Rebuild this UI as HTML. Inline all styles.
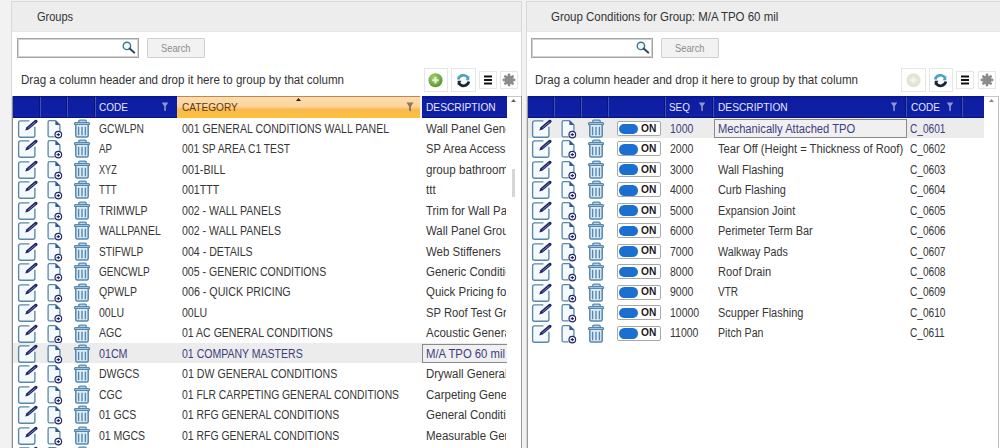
<!DOCTYPE html>
<html><head><meta charset="utf-8"><style>
*{box-sizing:border-box;margin:0;padding:0}
html,body{width:1000px;height:448px;overflow:hidden;background:#f2f2f2;font-family:"Liberation Sans",sans-serif;color:#333}
.a{position:absolute}
.panel{position:absolute;background:#fff;border:1px solid #d9d9d9}
.phead{position:absolute;left:0;top:0;right:0;height:30px;background:#ededed;border-bottom:1px solid #e6e6e6}
.ptitle{position:absolute;top:8.5px;font-size:12.8px;color:#333;white-space:nowrap}
.sbox{position:absolute;top:38px;width:122px;height:20px;border:1px solid #a3a3a3;box-shadow:inset 0 0 0 1px #d2d2d2;background:#fff}
.sbtn{position:absolute;top:38px;width:58px;height:20px;border:1px solid #cfcfcf;border-radius:1px;background:#f2f2f2;color:#8c8c8c;font-size:10.5px;line-height:12px}
.drag{position:absolute;top:73px;font-size:12.5px;color:#333;white-space:nowrap}
.tb{position:absolute;border:1px solid #e6e6e6;background:#fff}
.grid{position:absolute;background:#fff}
.hdr{position:absolute;top:96px;height:22px;background:linear-gradient(#091590,#0e1ea2 15%,#0f1fa4 80%,#1324aa 90%,#071176);}
.hsep{position:absolute;top:97px;height:20px;width:2px;border-left:1px solid #081478;background:#4252b4}
.htxt{position:absolute;top:100px;font-size:11.8px;color:#e6e6ff;white-space:nowrap}
.cell{position:absolute;font-size:12.5px;line-height:15px;white-space:nowrap;overflow:hidden;color:#363636}
.cell.sel{color:#3d3d80}
.t{display:inline-block;transform-origin:0 0}
.ic{position:absolute}
.selbg{position:absolute;background:#ececec}
.focus{position:absolute;border:1px solid #8a8a8a;background:#f0f0f0}
.tog{position:absolute;width:44px;height:15px;border:1px solid #a8a8a8;border-radius:2px;background:#fff}
.tog .pill{position:absolute;left:1.3px;top:1.6px;width:19.5px;height:10.6px;border-radius:5.3px;background:#1a6fd0}
.tog span{position:absolute;left:23.5px;top:-0.3px;font-size:10.2px;font-weight:bold;color:#1a1a1a;line-height:13px}
.filt{position:absolute;top:102px}
</style></head><body>
<svg width="0" height="0" style="position:absolute">
<defs>
<symbol id="rowic" viewBox="0 0 95 21">
 <rect x="6" y="3.3" width="15.5" height="15.5" rx="1.5" fill="#f3f9fd"/>
 <path d="M16.4 2.9H7.6Q5.6 2.9 5.6 4.9V17.2Q5.6 19.2 7.6 19.2H19.9Q21.9 19.2 21.9 17.2V8.8" fill="none" stroke="#5a87a6" stroke-width="1.35"/>
 <path d="M12.2 12.4L15.62 11.61L24.02 4.53A1.6 1.6 0 0 0 21.98 2.07L13.58 9.15Z" fill="#1e2262"/>
 <path d="M15.2 10.1L22.6 3.9" stroke="#8d98dc" stroke-width="0.8"/>
 <path d="M42.6 3H36.6Q35.5 3 35.5 4.2V17.4Q35.5 18.5 36.6 18.5H46.5V7Z" fill="#f3f9fd"/>
 <path d="M42.6 2.7H36.6Q35.1 2.7 35.1 4.2V17.4Q35.1 18.9 36.6 18.9H41.6" fill="none" stroke="#5a87a6" stroke-width="1.3"/>
 <path d="M42.6 2.7L46.9 7V13.2" fill="none" stroke="#5a87a6" stroke-width="1.3"/>
 <path d="M42.4 2.3L47.2 7.1H42.4Z" fill="#34579a"/>
 <circle cx="45.3" cy="16.6" r="3.3" fill="#fff" stroke="#262c6a" stroke-width="1.2"/>
 <path d="M45.3 14.9V18.3M43.6 16.6H47" stroke="#262c6a" stroke-width="1.1"/>
 <path d="M65.8 4.5V3.3Q65.8 2.2 66.9 2.2H72.1Q73.2 2.2 73.2 3.3V4.5" fill="#b6d4ee" stroke="#5787ad" stroke-width="1.3"/>
 <rect x="61.5" y="4.6" width="15" height="2.1" rx="1" fill="#b6d4ee" stroke="#5787ad" stroke-width="1.3"/>
 <path d="M62.8 7V17.6Q62.8 19.1 64.3 19.1H73.7Q75.2 19.1 75.2 17.6V7" fill="#dcecf8" stroke="#5787ad" stroke-width="1.5"/>
 <path d="M65.6 8.8V17.2M69 8.8V17.2M72.4 8.8V17.2" stroke="#5787ad" stroke-width="1.4"/>
</symbol>
<symbol id="filter" viewBox="0 0 8 10">
 <path d="M0.8 0.5H7.2L4.8 4.2V9.3L3.2 8.6V4.2Z" fill="#9096c8"/>
</symbol>
</defs></svg>

<!-- LEFT PANEL -->
<div class="panel" style="left:11px;top:1px;width:511px;height:460px">
 <div class="phead"></div>
</div>
<div class="ptitle" style="left:37px"><span class="t" style="transform:scaleX(0.858);">Groups</span></div>
<div class="sbox" style="left:17px"></div>
<svg class="a" style="left:121px;top:40px" width="16" height="16" viewBox="0 0 16 16"><circle cx="5.9" cy="5.9" r="3.7" fill="#f0fbff" stroke="#3f7686" stroke-width="1.4"/><path d="M8.6 8.6L13.2 12.6" stroke="#29485a" stroke-width="2" stroke-linecap="round"/></svg>
<div class="sbtn" style="left:147px"><div class="a" style="left:13px;top:3px"><span class="t" style="transform:scaleX(0.886);">Search</span></div></div>
<div class="drag" style="left:21px"><span class="t" style="transform:scaleX(0.926);">Drag a column header and drop it here to group by that column</span></div>
<div class="tb" style="left:424px;top:68px;width:24px;height:24px"></div>
<svg class="a" style="left:428px;top:73px" width="15" height="15" viewBox="0 0 15 15"><defs><radialGradient id="gg" cx="40%" cy="35%" r="65%"><stop offset="0" stop-color="#a8d478"/><stop offset="1" stop-color="#5a9432"/></radialGradient></defs><circle cx="7.5" cy="7.2" r="7" fill="url(#gg)"/><path d="M7.5 4V10.4M4.3 7.2H10.7" stroke="#e6f6d0" stroke-width="2"/></svg>
<div class="tb" style="left:451px;top:68px;width:25px;height:24px"></div>
<svg class="a" style="left:456px;top:73px" width="15" height="15" viewBox="0 0 15 15"><use href="#refresh"/></svg>
<div class="tb" style="left:479px;top:71px;width:18px;height:18px"></div>
<svg class="a" style="left:483px;top:75px" width="10" height="10" viewBox="0 0 10 10"><path d="M1 1.5H9M1 5H9M1 8.5H9" stroke="#111" stroke-width="1.8"/></svg>
<div class="tb" style="left:500px;top:71px;width:18px;height:18px"></div>
<svg class="a" style="left:502px;top:73px" width="14" height="14" viewBox="0 0 14 14"><use href="#gear"/></svg>

<!-- left grid -->
<div class="a" style="left:12px;top:96px;width:510px;height:360px;border-left:1px solid #8a8a8a;border-top:1px solid #c8c8c8;background:#fff"></div>
<div class="hdr" style="left:13px;width:164px"></div>
<div class="a" style="left:177px;top:96px;width:243px;height:22px;background:linear-gradient(#fddcac 0%,#fcd49c 45%,#f9b94e 60%,#fcc23e 100%);border-top:1px solid #b98a50"></div><div class="a" style="left:420px;top:96px;width:2px;height:22px;background:#eef0f6"></div>
<div class="hdr" style="left:422px;width:85px"></div>
<div class="hsep" style="left:39px"></div><div class="hsep" style="left:66px"></div><div class="hsep" style="left:94px"></div>
<div class="htxt" style="left:98.5px"><span class="t" style="transform:scaleX(0.848);">CODE</span></div>
<svg class="filt" style="left:160.5px" width="8" height="10"><use href="#filter"/></svg>
<div class="htxt" style="left:182px;color:#5a3a14"><span class="t" style="transform:scaleX(0.856);">CATEGORY</span></div>
<svg class="a" style="left:296px;top:98px" width="5" height="3"><path d="M0 3L2.5 0L5 3Z" fill="#222"/></svg>
<svg class="filt" style="left:406px" width="8" height="10"><path d="M0.5 0.5H7.5L5 4.5V9.5L3 8.5V4.5Z" fill="#8a7a60"/></svg>
<div class="htxt" style="left:426px"><span class="t" style="transform:scaleX(0.865);">DESCRIPTION</span></div>
<svg class="a" style="left:511px;top:99px" width="5" height="3"><path d="M0 3L2.5 0L5 3Z" fill="#666"/></svg>
<div class="a" style="left:512px;top:169px;width:3px;height:28px;background:#d6d6d6"></div>
<div class="a" style="left:521px;top:96px;width:1px;height:360px;background:#9a9a9a"></div>
<svg class="ic" style="left:13px;top:118.00px" width="95" height="21" viewBox="0 0 95 21"><use href="#rowic"/></svg><div class="cell" style="left:98.5px;top:121.80px;width:76px"><span class="t" style="transform:scaleX(0.820);">GCWLPN</span></div><div class="cell" style="left:182px;top:121.80px;width:236px"><span class="t" style="transform:scaleX(0.843);">001 GENERAL CONDITIONS WALL PANEL</span></div><div class="cell" style="left:426px;top:121.80px;width:80px"><span class="t" style="transform:scaleX(0.916);">Wall Panel General Conditions</span></div><svg class="ic" style="left:13px;top:138.45px" width="95" height="21" viewBox="0 0 95 21"><use href="#rowic"/></svg><div class="cell" style="left:98.5px;top:142.25px;width:76px"><span class="t" style="transform:scaleX(0.779);">AP</span></div><div class="cell" style="left:182px;top:142.25px;width:236px"><span class="t" style="transform:scaleX(0.821);">001 SP AREA C1 TEST</span></div><div class="cell" style="left:426px;top:142.25px;width:80px"><span class="t" style="transform:scaleX(0.895);">SP Area Access I</span></div><svg class="ic" style="left:13px;top:158.90px" width="95" height="21" viewBox="0 0 95 21"><use href="#rowic"/></svg><div class="cell" style="left:98.5px;top:162.70px;width:76px"><span class="t" style="transform:scaleX(0.728);">XYZ</span></div><div class="cell" style="left:182px;top:162.70px;width:236px"><span class="t" style="transform:scaleX(0.857);">001-BILL</span></div><div class="cell" style="left:426px;top:162.70px;width:80px"><span class="t" style="transform:scaleX(0.930);">group bathroom</span></div><svg class="ic" style="left:13px;top:179.35px" width="95" height="21" viewBox="0 0 95 21"><use href="#rowic"/></svg><div class="cell" style="left:98.5px;top:183.15px;width:76px"><span class="t" style="transform:scaleX(0.772);">TTT</span></div><div class="cell" style="left:182px;top:183.15px;width:236px"><span class="t" style="transform:scaleX(0.850);">001TTT</span></div><div class="cell" style="left:426px;top:183.15px;width:80px"><span class="t" style="transform:scaleX(0.930);">ttt</span></div><svg class="ic" style="left:13px;top:199.80px" width="95" height="21" viewBox="0 0 95 21"><use href="#rowic"/></svg><div class="cell" style="left:98.5px;top:203.60px;width:76px"><span class="t" style="transform:scaleX(0.843);">TRIMWLP</span></div><div class="cell" style="left:182px;top:203.60px;width:236px"><span class="t" style="transform:scaleX(0.846);">002 - WALL PANELS</span></div><div class="cell" style="left:426px;top:203.60px;width:80px"><span class="t" style="transform:scaleX(0.914);">Trim for Wall Panels</span></div><svg class="ic" style="left:13px;top:220.25px" width="95" height="21" viewBox="0 0 95 21"><use href="#rowic"/></svg><div class="cell" style="left:98.5px;top:224.05px;width:76px"><span class="t" style="transform:scaleX(0.838);">WALLPANEL</span></div><div class="cell" style="left:182px;top:224.05px;width:236px"><span class="t" style="transform:scaleX(0.846);">002 - WALL PANELS</span></div><div class="cell" style="left:426px;top:224.05px;width:80px"><span class="t" style="transform:scaleX(0.911);">Wall Panel Group</span></div><svg class="ic" style="left:13px;top:240.70px" width="95" height="21" viewBox="0 0 95 21"><use href="#rowic"/></svg><div class="cell" style="left:98.5px;top:244.50px;width:76px"><span class="t" style="transform:scaleX(0.816);">STIFWLP</span></div><div class="cell" style="left:182px;top:244.50px;width:236px"><span class="t" style="transform:scaleX(0.850);">004 - DETAILS</span></div><div class="cell" style="left:426px;top:244.50px;width:80px"><span class="t" style="transform:scaleX(0.916);">Web Stiffeners</span></div><svg class="ic" style="left:13px;top:261.15px" width="95" height="21" viewBox="0 0 95 21"><use href="#rowic"/></svg><div class="cell" style="left:98.5px;top:264.95px;width:76px"><span class="t" style="transform:scaleX(0.804);">GENCWLP</span></div><div class="cell" style="left:182px;top:264.95px;width:236px"><span class="t" style="transform:scaleX(0.844);">005 - GENERIC CONDITIONS</span></div><div class="cell" style="left:426px;top:264.95px;width:80px"><span class="t" style="transform:scaleX(0.919);">Generic Conditions</span></div><svg class="ic" style="left:13px;top:281.60px" width="95" height="21" viewBox="0 0 95 21"><use href="#rowic"/></svg><div class="cell" style="left:98.5px;top:285.40px;width:76px"><span class="t" style="transform:scaleX(0.840);">QPWLP</span></div><div class="cell" style="left:182px;top:285.40px;width:236px"><span class="t" style="transform:scaleX(0.855);">006 - QUICK PRICING</span></div><div class="cell" style="left:426px;top:285.40px;width:80px"><span class="t" style="transform:scaleX(0.918);">Quick Pricing for</span></div><svg class="ic" style="left:13px;top:302.05px" width="95" height="21" viewBox="0 0 95 21"><use href="#rowic"/></svg><div class="cell" style="left:98.5px;top:305.85px;width:76px"><span class="t" style="transform:scaleX(0.840);">00LU</span></div><div class="cell" style="left:182px;top:305.85px;width:236px"><span class="t" style="transform:scaleX(0.840);">00LU</span></div><div class="cell" style="left:426px;top:305.85px;width:80px"><span class="t" style="transform:scaleX(0.900);">SP Roof Test Group</span></div><svg class="ic" style="left:13px;top:322.50px" width="95" height="21" viewBox="0 0 95 21"><use href="#rowic"/></svg><div class="cell" style="left:98.5px;top:326.30px;width:76px"><span class="t" style="transform:scaleX(0.840);">AGC</span></div><div class="cell" style="left:182px;top:326.30px;width:236px"><span class="t" style="transform:scaleX(0.843);">01 AC GENERAL CONDITIONS</span></div><div class="cell" style="left:426px;top:326.30px;width:80px"><span class="t" style="transform:scaleX(0.918);">Acoustic General</span></div><div class="selbg" style="left:13px;top:342.95px;width:494px;height:20.45px"></div><div class="focus" style="left:421.5px;top:343.95px;width:95px;height:19.25px"></div><svg class="ic" style="left:13px;top:342.95px" width="95" height="21" viewBox="0 0 95 21"><use href="#rowic"/></svg><div class="cell sel" style="left:98.5px;top:346.75px;width:76px"><span class="t" style="transform:scaleX(0.855);">01CM</span></div><div class="cell sel" style="left:182px;top:346.75px;width:236px"><span class="t" style="transform:scaleX(0.842);">01 COMPANY MASTERS</span></div><div class="cell sel" style="left:426px;top:346.75px;width:80px"><span class="t" style="transform:scaleX(0.905);">M/A TPO 60 mil</span></div><svg class="ic" style="left:13px;top:363.40px" width="95" height="21" viewBox="0 0 95 21"><use href="#rowic"/></svg><div class="cell" style="left:98.5px;top:367.20px;width:76px"><span class="t" style="transform:scaleX(0.840);">DWGCS</span></div><div class="cell" style="left:182px;top:367.20px;width:236px"><span class="t" style="transform:scaleX(0.849);">01 DW GENERAL CONDITIONS</span></div><div class="cell" style="left:426px;top:367.20px;width:80px"><span class="t" style="transform:scaleX(0.917);">Drywall General</span></div><svg class="ic" style="left:13px;top:383.85px" width="95" height="21" viewBox="0 0 95 21"><use href="#rowic"/></svg><div class="cell" style="left:98.5px;top:387.65px;width:76px"><span class="t" style="transform:scaleX(0.840);">CGC</span></div><div class="cell" style="left:182px;top:387.65px;width:236px"><span class="t" style="transform:scaleX(0.828);">01 FLR CARPETING GENERAL CONDITIONS</span></div><div class="cell" style="left:426px;top:387.65px;width:80px"><span class="t" style="transform:scaleX(0.919);">Carpeting General</span></div><svg class="ic" style="left:13px;top:404.30px" width="95" height="21" viewBox="0 0 95 21"><use href="#rowic"/></svg><div class="cell" style="left:98.5px;top:408.10px;width:76px"><span class="t" style="transform:scaleX(0.840);">01 GCS</span></div><div class="cell" style="left:182px;top:408.10px;width:236px"><span class="t" style="transform:scaleX(0.834);">01 RFG GENERAL CONDITIONS</span></div><div class="cell" style="left:426px;top:408.10px;width:80px"><span class="t" style="transform:scaleX(0.919);">General Conditions</span></div><svg class="ic" style="left:13px;top:424.75px" width="95" height="21" viewBox="0 0 95 21"><use href="#rowic"/></svg><div class="cell" style="left:98.5px;top:428.55px;width:76px"><span class="t" style="transform:scaleX(0.840);">01 MGCS</span></div><div class="cell" style="left:182px;top:428.55px;width:236px"><span class="t" style="transform:scaleX(0.834);">01 RFG GENERAL CONDITIONS</span></div><div class="cell" style="left:426px;top:428.55px;width:80px"><span class="t" style="transform:scaleX(0.919);">Measurable General</span></div><svg class="ic" style="left:13px;top:445.20px" width="95" height="21" viewBox="0 0 95 21"><use href="#rowic"/></svg><div class="cell" style="left:98.5px;top:449.00px;width:76px"><span class="t" style="transform:scaleX(0.840);">01 XGCS</span></div><div class="cell" style="left:182px;top:449.00px;width:236px"><span class="t" style="transform:scaleX(0.834);">01 RFG GENERAL CONDITIONS</span></div><div class="cell" style="left:426px;top:449.00px;width:80px"><span class="t" style="transform:scaleX(0.917);">General</span></div>
<div class="a" style="left:507px;top:118px;width:14px;height:340px;background:#fff"></div>
<div class="a" style="left:512px;top:169px;width:3px;height:28px;background:#d6d6d6"></div>

<!-- RIGHT PANEL -->
<div class="panel" style="left:526px;top:1px;width:480px;height:460px">
 <div class="phead"></div>
</div>
<div class="ptitle" style="left:551px"><span class="t" style="transform:scaleX(0.896);">Group Conditions for Group: M/A TPO 60 mil</span></div>
<div class="sbox" style="left:531px"></div>
<svg class="a" style="left:635px;top:40px" width="16" height="16" viewBox="0 0 16 16"><circle cx="5.9" cy="5.9" r="3.7" fill="#f0fbff" stroke="#3f7686" stroke-width="1.4"/><path d="M8.6 8.6L13.2 12.6" stroke="#29485a" stroke-width="2" stroke-linecap="round"/></svg>
<div class="sbtn" style="left:661px"><div class="a" style="left:13px;top:3px"><span class="t" style="transform:scaleX(0.886);">Search</span></div></div>
<div class="drag" style="left:535px"><span class="t" style="transform:scaleX(0.926);">Drag a column header and drop it here to group by that column</span></div>
<div class="tb" style="left:901px;top:68px;width:25px;height:24px"></div>
<svg class="a" style="left:906px;top:73px" width="15" height="15" viewBox="0 0 15 15"><circle cx="7.5" cy="7.2" r="7" fill="#dfe6d2"/><path d="M7.5 3.8V10.6M4.1 7.2H10.9" stroke="#f2f6ea" stroke-width="2.2"/></svg>
<div class="tb" style="left:929px;top:68px;width:24px;height:24px"></div>
<svg class="a" style="left:933px;top:73px" width="15" height="15" viewBox="0 0 15 15"><use href="#refresh"/></svg>
<div class="tb" style="left:956px;top:71px;width:18px;height:18px"></div>
<svg class="a" style="left:960px;top:75px" width="10" height="10" viewBox="0 0 10 10"><path d="M1 1.5H9M1 5H9M1 8.5H9" stroke="#111" stroke-width="1.8"/></svg>
<div class="tb" style="left:978px;top:71px;width:18px;height:18px"></div>
<svg class="a" style="left:980px;top:73px" width="14" height="14" viewBox="0 0 14 14"><use href="#gear"/></svg>

<!-- right grid -->
<div class="a" style="left:527px;top:96px;width:472px;height:360px;border-left:1px solid #9a9a9a;border-top:1px solid #c8c8c8;border-right:1px solid #bdbdbd;background:#fff"></div>
<div class="hdr" style="left:528px;width:456px"></div>
<div class="hsep" style="left:553px"></div><div class="hsep" style="left:580px"></div><div class="hsep" style="left:607px"></div><div class="hsep" style="left:664px"></div><div class="hsep" style="left:712px"></div><div class="hsep" style="left:905px"></div><div class="hsep" style="left:961px"></div>
<div class="htxt" style="left:669px"><span class="t" style="transform:scaleX(0.840);">SEQ</span></div>
<svg class="filt" style="left:698px" width="8" height="10"><use href="#filter"/></svg>
<div class="htxt" style="left:718px"><span class="t" style="transform:scaleX(0.865);">DESCRIPTION</span></div>
<svg class="filt" style="left:890px" width="8" height="10"><use href="#filter"/></svg>
<div class="htxt" style="left:911px"><span class="t" style="transform:scaleX(0.848);">CODE</span></div>
<svg class="filt" style="left:946px" width="8" height="10"><use href="#filter"/></svg>
<svg class="a" style="left:989px;top:99px" width="5" height="3"><path d="M0 3L2.5 0L5 3Z" fill="#888"/></svg>
<div class="selbg" style="left:528px;top:118.00px;width:456px;height:20.45px"></div><div class="focus" style="left:713.5px;top:118.80px;width:193px;height:19.25px"></div><svg class="ic" style="left:527px;top:118.00px" width="95" height="21" viewBox="0 0 95 21"><use href="#rowic"/></svg><div class="tog" style="left:616.5px;top:121.00px"><div class="pill"></div><span>ON</span></div><div class="cell sel" style="left:669.5px;top:121.80px;width:40px"><span class="t" style="transform:scaleX(0.845);">1000</span></div><div class="cell sel" style="left:718px;top:121.80px;width:188px"><span class="t" style="transform:scaleX(0.895);">Mechanically Attached TPO</span></div><div class="cell sel" style="left:910px;top:121.80px;width:70px"><span class="t" style="transform:scaleX(0.811);">C_0601</span></div><svg class="ic" style="left:527px;top:138.45px" width="95" height="21" viewBox="0 0 95 21"><use href="#rowic"/></svg><div class="tog" style="left:616.5px;top:141.45px"><div class="pill"></div><span>ON</span></div><div class="cell" style="left:669.5px;top:142.25px;width:40px"><span class="t" style="transform:scaleX(0.840);">2000</span></div><div class="cell" style="left:718px;top:142.25px;width:188px"><span class="t" style="transform:scaleX(0.898);">Tear Off (Height = Thickness of Roof)</span></div><div class="cell" style="left:910px;top:142.25px;width:70px"><span class="t" style="transform:scaleX(0.811);">C_0602</span></div><svg class="ic" style="left:527px;top:158.90px" width="95" height="21" viewBox="0 0 95 21"><use href="#rowic"/></svg><div class="tog" style="left:616.5px;top:161.90px"><div class="pill"></div><span>ON</span></div><div class="cell" style="left:669.5px;top:162.70px;width:40px"><span class="t" style="transform:scaleX(0.840);">3000</span></div><div class="cell" style="left:718px;top:162.70px;width:188px"><span class="t" style="transform:scaleX(0.880);">Wall Flashing</span></div><div class="cell" style="left:910px;top:162.70px;width:70px"><span class="t" style="transform:scaleX(0.811);">C_0603</span></div><svg class="ic" style="left:527px;top:179.35px" width="95" height="21" viewBox="0 0 95 21"><use href="#rowic"/></svg><div class="tog" style="left:616.5px;top:182.35px"><div class="pill"></div><span>ON</span></div><div class="cell" style="left:669.5px;top:183.15px;width:40px"><span class="t" style="transform:scaleX(0.840);">4000</span></div><div class="cell" style="left:718px;top:183.15px;width:188px"><span class="t" style="transform:scaleX(0.872);">Curb Flashing</span></div><div class="cell" style="left:910px;top:183.15px;width:70px"><span class="t" style="transform:scaleX(0.811);">C_0604</span></div><svg class="ic" style="left:527px;top:199.80px" width="95" height="21" viewBox="0 0 95 21"><use href="#rowic"/></svg><div class="tog" style="left:616.5px;top:202.80px"><div class="pill"></div><span>ON</span></div><div class="cell" style="left:669.5px;top:203.60px;width:40px"><span class="t" style="transform:scaleX(0.840);">5000</span></div><div class="cell" style="left:718px;top:203.60px;width:188px"><span class="t" style="transform:scaleX(0.875);">Expansion Joint</span></div><div class="cell" style="left:910px;top:203.60px;width:70px"><span class="t" style="transform:scaleX(0.811);">C_0605</span></div><svg class="ic" style="left:527px;top:220.25px" width="95" height="21" viewBox="0 0 95 21"><use href="#rowic"/></svg><div class="tog" style="left:616.5px;top:223.25px"><div class="pill"></div><span>ON</span></div><div class="cell" style="left:669.5px;top:224.05px;width:40px"><span class="t" style="transform:scaleX(0.840);">6000</span></div><div class="cell" style="left:718px;top:224.05px;width:188px"><span class="t" style="transform:scaleX(0.876);">Perimeter Term Bar</span></div><div class="cell" style="left:910px;top:224.05px;width:70px"><span class="t" style="transform:scaleX(0.811);">C_0606</span></div><svg class="ic" style="left:527px;top:240.70px" width="95" height="21" viewBox="0 0 95 21"><use href="#rowic"/></svg><div class="tog" style="left:616.5px;top:243.70px"><div class="pill"></div><span>ON</span></div><div class="cell" style="left:669.5px;top:244.50px;width:40px"><span class="t" style="transform:scaleX(0.840);">7000</span></div><div class="cell" style="left:718px;top:244.50px;width:188px"><span class="t" style="transform:scaleX(0.856);">Walkway Pads</span></div><div class="cell" style="left:910px;top:244.50px;width:70px"><span class="t" style="transform:scaleX(0.811);">C_0607</span></div><svg class="ic" style="left:527px;top:261.15px" width="95" height="21" viewBox="0 0 95 21"><use href="#rowic"/></svg><div class="tog" style="left:616.5px;top:264.15px"><div class="pill"></div><span>ON</span></div><div class="cell" style="left:669.5px;top:264.95px;width:40px"><span class="t" style="transform:scaleX(0.840);">8000</span></div><div class="cell" style="left:718px;top:264.95px;width:188px"><span class="t" style="transform:scaleX(0.889);">Roof Drain</span></div><div class="cell" style="left:910px;top:264.95px;width:70px"><span class="t" style="transform:scaleX(0.811);">C_0608</span></div><svg class="ic" style="left:527px;top:281.60px" width="95" height="21" viewBox="0 0 95 21"><use href="#rowic"/></svg><div class="tog" style="left:616.5px;top:284.60px"><div class="pill"></div><span>ON</span></div><div class="cell" style="left:669.5px;top:285.40px;width:40px"><span class="t" style="transform:scaleX(0.840);">9000</span></div><div class="cell" style="left:718px;top:285.40px;width:188px"><span class="t" style="transform:scaleX(0.804);">VTR</span></div><div class="cell" style="left:910px;top:285.40px;width:70px"><span class="t" style="transform:scaleX(0.811);">C_0609</span></div><svg class="ic" style="left:527px;top:302.05px" width="95" height="21" viewBox="0 0 95 21"><use href="#rowic"/></svg><div class="tog" style="left:616.5px;top:305.05px"><div class="pill"></div><span>ON</span></div><div class="cell" style="left:669.5px;top:305.85px;width:40px"><span class="t" style="transform:scaleX(0.840);">10000</span></div><div class="cell" style="left:718px;top:305.85px;width:188px"><span class="t" style="transform:scaleX(0.878);">Scupper Flashing</span></div><div class="cell" style="left:910px;top:305.85px;width:70px"><span class="t" style="transform:scaleX(0.811);">C_0610</span></div><svg class="ic" style="left:527px;top:322.50px" width="95" height="21" viewBox="0 0 95 21"><use href="#rowic"/></svg><div class="tog" style="left:616.5px;top:325.50px"><div class="pill"></div><span>ON</span></div><div class="cell" style="left:669.5px;top:326.30px;width:40px"><span class="t" style="transform:scaleX(0.840);">11000</span></div><div class="cell" style="left:718px;top:326.30px;width:188px"><span class="t" style="transform:scaleX(0.850);">Pitch Pan</span></div><div class="cell" style="left:910px;top:326.30px;width:70px"><span class="t" style="transform:scaleX(0.811);">C_0611</span></div>

<svg width="0" height="0" style="position:absolute">
<defs>
<symbol id="refresh" viewBox="0 0 15 15">
 <path d="M2.2 6.6A5.2 5.2 0 0 1 12 5.2" fill="none" stroke="#4aa3c8" stroke-width="2.7"/>
 <path d="M13.3 2.6V7.2H9.4Z" fill="#4aa3c8"/>
 <path d="M12.8 8.6A5.2 5.2 0 0 1 3 9.8" fill="none" stroke="#18243a" stroke-width="2.7"/>
 <path d="M1.7 12.4V7.8H5.6Z" fill="#18243a"/>
</symbol>
<symbol id="gear" viewBox="0 0 14 14">
 <g fill="#8c8c8c">
 <circle cx="7" cy="7" r="4.5"/>
 <g id="teeth"><circle cx="7" cy="1.9" r="1.4"/><circle cx="7" cy="12.1" r="1.4"/><circle cx="1.9" cy="7" r="1.4"/><circle cx="12.1" cy="7" r="1.4"/></g>
 <use href="#teeth" transform="rotate(45 7 7)"/>
 </g>
</symbol>
</defs></svg>
</body></html>
